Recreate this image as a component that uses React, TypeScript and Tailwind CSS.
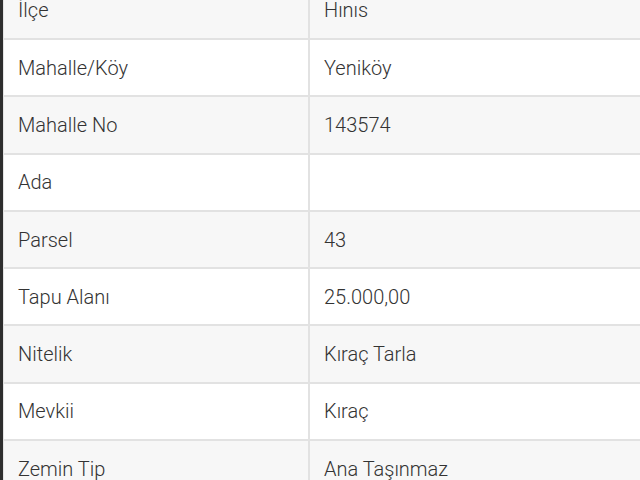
const rows: [string, string][] = [
  ["İlçe", "Hınıs"],
  ["Mahalle/Köy", "Yeniköy"],
  ["Mahalle No", "143574"],
  ["Ada", ""],
  ["Parsel", "43"],
  ["Tapu Alanı", "25.000,00"],
  ["Nitelik", "Kıraç Tarla"],
  ["Mevkii", "Kıraç"],
  ["Zemin Tip", "Ana Taşınmaz"],
];

export default function App() {
  return (
    <div className="flex h-[480px] w-[640px] overflow-hidden bg-white font-['Roboto',sans-serif] text-[20px] font-light text-[#333]">
      <div className="w-[3px] shrink-0 bg-[#2e2e2e]" />
      <div className="flex-1 border-l border-[#e4e4e4]">
        <div className="-mt-[19.3px]">
          {rows.map(([label, value], i) => (
            <div
              key={label}
              className={`flex h-[57.3px] border-t-2 border-[#e2e2e2] ${i % 2 === 0 ? "bg-[#f7f7f7]" : "bg-white"}`}
            >
              <div className="flex w-[306px] items-center border-r-2 border-[#e2e2e2] pl-[14px]">{label}</div>
              <div className="flex flex-1 items-center pl-[14px]">{value}</div>
            </div>
          ))}
        </div>
      </div>
    </div>
  );
}
